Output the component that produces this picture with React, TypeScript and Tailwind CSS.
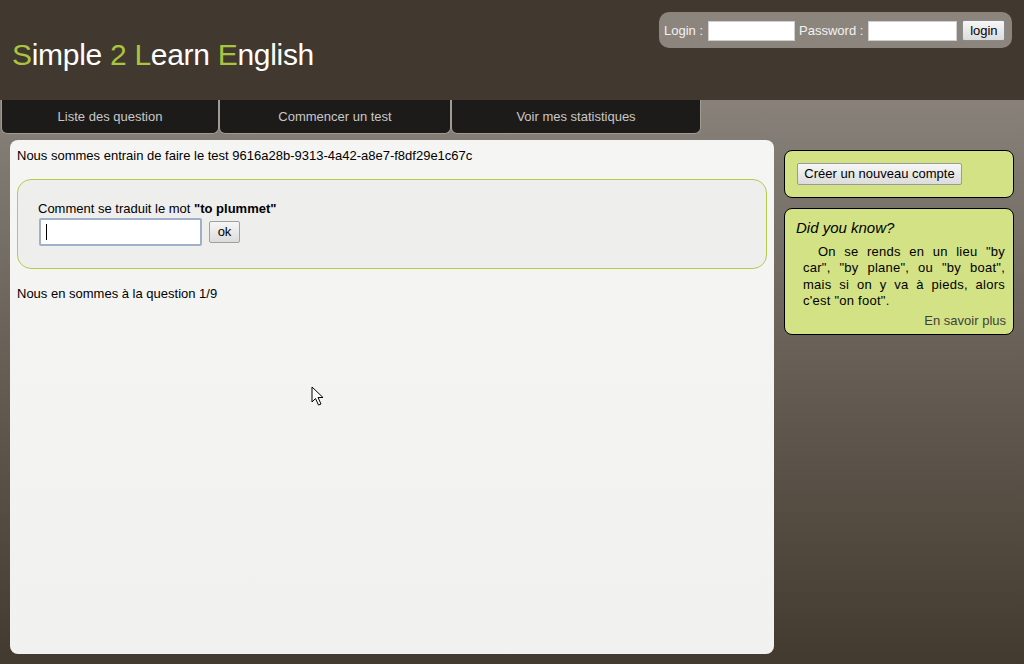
import React, { useState } from "react";

const font = { fontFamily: '"Liberation Sans", Arial, sans-serif' };

const tabs = [
    { label: "Liste des question", w: "w-[218px]" },
    { label: "Commencer un test", w: "w-[232px]" },
    { label: "Voir mes statistiques", w: "w-[250px]" },
];

const Cursor = () => (
    <svg
        className="absolute left-[311px] top-[386px]"
        width="14"
        height="21"
        viewBox="0 0 14 21"
    >
        <path
            d="M1 1 L1 16 L4.5 12.5 L7.5 19 L10 18 L7 11.5 L12 11.5 Z"
            fill="#fff"
            stroke="#000"
            strokeWidth="1"
            strokeLinejoin="round"
        />
    </svg>
);

const App = () => {
    const [login, setLogin] = useState("");
    const [password, setPassword] = useState("");
    const [answer, setAnswer] = useState("");

    return (
        <div
            className="relative min-h-screen w-[1024px] h-[664px] overflow-hidden bg-gradient-to-b from-[#958f89] to-[#433a2f] text-[13px] text-black"
            style={font}
        >
            {/* Header */}
            <header className="h-[100px] bg-[#41382f] flex justify-between">
                <h1 className="pl-3 pt-[38px] text-[30px] tracking-[-0.3px] leading-[34px] text-white">
                    <span className="text-[#a9c53f]">S</span>imple{" "}
                    <span className="text-[#a9c53f]">2</span>{" "}
                    <span className="text-[#a9c53f]">L</span>earn{" "}
                    <span className="text-[#a9c53f]">E</span>nglish
                </h1>
                <div className="mt-[12px] mr-[12px] h-[36px] w-[353px] rounded-[10px] bg-[#8c857e] flex items-center pl-[5px] pt-[1px] text-[#f2f2f2]">
                    <span>Login :</span>
                    <input
                        value={login}
                        onChange={(e) => setLogin(e.target.value)}
                        className="ml-[5px] h-[20px] w-[87px] bg-white border border-[#d0d0d0] outline-none"
                    />
                    <span className="ml-[4px]">Password :</span>
                    <input
                        type="password"
                        value={password}
                        onChange={(e) => setPassword(e.target.value)}
                        className="ml-[5px] h-[20px] w-[89px] bg-white border border-[#d0d0d0] outline-none"
                    />
                    <button className="ml-[5px] h-[21px] w-[43px] rounded-[2px] border border-[#8a8a8a] bg-gradient-to-b from-[#f6f6f6] to-[#dcdcdc] text-black">
                        login
                    </button>
                </div>
            </header>

            {/* Tabs */}
            <nav className="flex pl-[1px] h-[34px]">
                {tabs.map((t) => (
                    <div
                        key={t.label}
                        className={`${t.w} h-[34px] bg-[#1d1b19] border-x border-b border-[#a09b95] rounded-b-[6px] flex items-center justify-center text-[#c8c8c8]`}
                    >
                        {t.label}
                    </div>
                ))}
            </nav>

            <div className="flex pt-[6px] pl-[10px] gap-[10px]">
                {/* Main panel */}
                <main className="w-[764px] h-[514px] rounded-[8px] bg-gradient-to-b from-[#f5f5f4] to-[#f1f1f0] px-[7px] pt-[8px]">
                    <p className="leading-[16px]">
                        Nous sommes entrain de faire le test
                        9616a28b-9313-4a42-a8e7-f8df29e1c67c
                    </p>
                    <div className="mt-[15px] h-[90px] rounded-[14px] border border-[#b3cb4f] bg-[#eeeeed] pl-[20px] pt-[21px]">
                        <p className="leading-[16px]">
                            Comment se traduit le mot <b>"to plummet"</b>
                        </p>
                        <div className="flex items-center gap-[7px] mt-[1px]">
                            <div className="relative ml-[1px]">
                                <input
                                    value={answer}
                                    onChange={(e) => setAnswer(e.target.value)}
                                    className="h-[28px] w-[163px] bg-white border-2 border-[#9fb0c8] rounded-[2px] outline-none px-[5px]"
                                />
                                <span className="absolute left-[7px] top-[6px] h-[16px] w-[1px] bg-black" />
                            </div>
                            <button className="h-[22px] w-[31px] rounded-[2px] border border-[#a0a0a0] bg-gradient-to-b from-[#f6f6f6] to-[#dcdcdc]">
                                ok
                            </button>
                        </div>
                    </div>
                    <p className="mt-[17px] leading-[16px]">
                        Nous en sommes à la question 1/9
                    </p>
                </main>

                {/* Sidebar */}
                <aside className="w-[230px] pt-[10px] flex flex-col gap-[10px]">
                    <div className="h-[48px] rounded-[8px] border border-black bg-[#d3e284] flex items-center pl-[12px]">
                        <button className="h-[22px] w-[165px] rounded-[2px] border border-[#9a9a9a] bg-gradient-to-b from-[#f6f6f6] to-[#dcdcdc]">
                            Créer un nouveau compte
                        </button>
                    </div>
                    <div className="h-[127px] rounded-[8px] border border-black bg-[#d3e284] px-[7px] pt-[10px]">
                        <p className="italic text-[15px] leading-[18px] pl-[4px]">
                            Did you know?
                        </p>
                        <p className="mt-[7px] pl-[11px] pr-[1px] text-justify indent-[15px] leading-[16.3px] tracking-[0.25px]">
                            On se rends en un lieu "by car", "by plane", ou
                            "by boat", mais si on y va à pieds, alors c'est
                            "on foot".
                        </p>
                        <p className="text-right text-[#3f3f3f] leading-[16px] mt-[4px]">
                            En savoir plus
                        </p>
                    </div>
                </aside>
            </div>

            <Cursor />
        </div>
    );
};

export default App;
